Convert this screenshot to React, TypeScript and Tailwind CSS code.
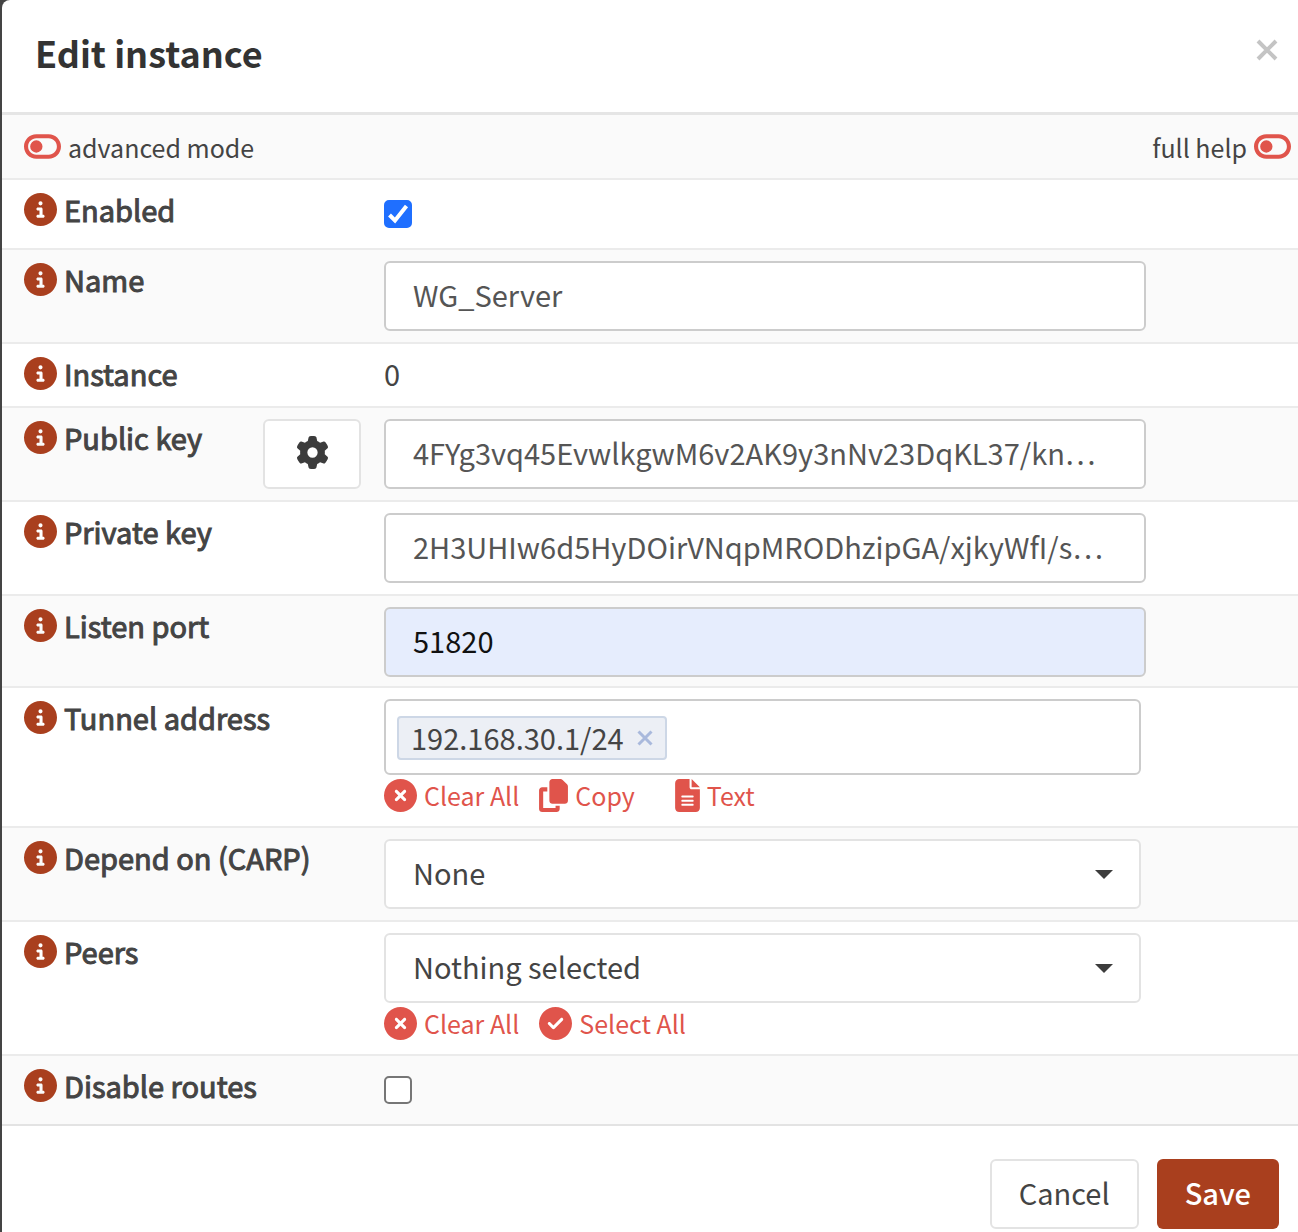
import type { ReactNode } from "react";
import {
  FaCircleCheck,
  FaCircleInfo,
  FaCircleXmark,
  FaCopy,
  FaFileLines,
  FaGear,
  FaToggleOff,
} from "react-icons/fa6";

const inputClass =
  "block h-[70px] w-full rounded-md border-2 border-[#cccccc] bg-white px-[27px] pb-1 text-[29px] text-[#555555] outline-none";

type RowProps = {
  label: string;
  htmlFor?: string;
  striped?: boolean;
  dense?: boolean;
  action?: ReactNode;
  children: ReactNode;
};

const Row = ({ label, htmlFor, striped, dense, action, children }: RowProps) => (
  <div
    className={`grid grid-cols-[360px_1fr] border-t-2 border-[#ebebeb] pt-[11px] pl-[22px] ${
      striped ? "bg-[#fafafa]" : "bg-white"
    } ${dense ? "pb-[9px]" : "pb-[11px]"}`}
  >
    <div className="flex items-start justify-between pr-[23px]">
      <label htmlFor={htmlFor} className="flex items-center gap-[7px] leading-9 [-webkit-text-stroke:1px_#444444]">
        <FaCircleInfo className="size-[33px] text-[#a93f1e]" />
        {label}
      </label>
      {action}
    </div>
    <div>{children}</div>
  </div>
);

const Select = ({ id, value }: { id: string; value: string }) => (
  <div className="relative mr-[5px]">
    <select
      id={id}
      defaultValue={value}
      className="block h-[70px] w-full appearance-none rounded-md border-2 border-[#e3e3e3] bg-white px-[27px] pb-[2px] text-[29px] text-[#444444] outline-none"
    >
      <option>{value}</option>
    </select>
    <svg
      viewBox="0 0 18 9"
      className="pointer-events-none absolute top-[31px] right-7 h-[9px] w-[18px] fill-[#3c3c3c]"
    >
      <path d="M0 0h18L9 9z" />
    </svg>
  </div>
);

const Checkbox = ({ id, checked }: { id: string; checked?: boolean }) => (
  <div className="flex h-[46px] items-center">
    <div className="relative size-7">
      <input
        id={id}
        type="checkbox"
        defaultChecked={checked}
        className="peer block size-7 appearance-none rounded-[5px] border-2 border-[#767676] bg-white checked:border-[#1f6fff] checked:bg-[#1f6fff]"
      />
      <svg
        viewBox="0 0 28 28"
        className="pointer-events-none absolute inset-0 hidden fill-none stroke-white peer-checked:block"
        strokeWidth="4"
      >
        <path d="M5.500 15l5.500 5.500L22.500 6" />
      </svg>
    </div>
  </div>
);

const LinkButton = ({ icon, children }: { icon: ReactNode; children: ReactNode }) => (
  <a href="#" className="flex items-center gap-[7px] text-[25px] text-[#e0544b]">
    {icon}
    <span className="pt-[2px]">{children}</span>
  </a>
);

const App = () => {
  return (
    <div
      lang="en"
      className="bg-[#444444] pl-[2px] font-['Noto_Sans_CJK_SC','Open_Sans',sans-serif] text-[29px] text-[#444444]"
    >
      <form className="rounded-tl-lg bg-white" onSubmit={(e) => e.preventDefault()}>
        <header className="flex h-28 items-center justify-between pr-[19px] pb-2 pl-[33px]">
          <h1 className="text-[36px] font-bold text-[#333333]">Edit instance</h1>
          <button type="button" aria-label="Close" className="mb-1">
            <svg viewBox="0 0 24 24" className="size-6 stroke-[#c4c4c4]" strokeWidth="4">
              <path d="M3 3l18 18M21 3L3 21" />
            </svg>
          </button>
        </header>

        <div className="flex h-[66px] items-center justify-between border-t-[3px] border-[#e5e5e5] bg-[#fafafa] pr-[7px] pl-[22px] text-[25px]">
          <a href="#" className="flex items-center gap-[7px]">
            <FaToggleOff className="h-[33px] w-[37px] text-[#e0544b]" />
            <span className="pt-[2px]">advanced mode</span>
          </a>
          <a href="#" className="flex items-center gap-[7px]">
            <span className="pt-[2px]">full help</span>
            <FaToggleOff className="h-[33px] w-[37px] text-[#e0544b]" />
          </a>
        </div>

        <Row label="Enabled" htmlFor="enabled">
          <Checkbox id="enabled" checked />
        </Row>
        <Row label="Name" htmlFor="name" striped>
          <div className="w-5/6">
            <input id="name" type="text" defaultValue="WG_Server" className={inputClass} />
          </div>
        </Row>
        <Row label="Instance">
          <div className="min-h-10 leading-9">0</div>
        </Row>
        <Row
          label="Public key"
          htmlFor="pubkey"
          striped
          action={
            <button
              type="button"
              aria-label="Generate new keypair"
              className="flex h-[70px] w-[98px] items-center justify-center rounded-md border-2 border-[#e3e3e3] bg-white pb-1"
            >
              <FaGear className="size-[33px] text-[#3c3c3c]" />
            </button>
          }
        >
          <div className="w-5/6">
            <input
              id="pubkey"
              type="text"
              defaultValue="4FYg3vq45EvwlkgwM6v2AK9y3nNv23DqKL37/kn…"
              className={inputClass}
            />
          </div>
        </Row>
        <Row label="Private key" htmlFor="privkey">
          <div className="w-5/6">
            <input
              id="privkey"
              type="text"
              defaultValue="2H3UHIw6d5HyDOirVNqpMRODhzipGA/xjkyWfI/s…"
              className={inputClass}
            />
          </div>
        </Row>
        <Row label="Listen port" htmlFor="port" striped dense>
          <div className="w-5/6">
            <input
              id="port"
              type="text"
              defaultValue="51820"
              className="block h-[70px] w-full rounded-md border-2 border-[#cccccc] bg-[#e6edfd] px-[27px] pb-1 text-[29px] text-[#111111] outline-none"
            />
          </div>
        </Row>
        <Row label="Tunnel address" htmlFor="tunnel">
          <div className="w-5/6">
            <div className="mr-[5px] flex h-[76px] items-center gap-2 rounded-md border-2 border-[#cccccc] bg-white px-[11px] pt-[2px]">
              <span className="flex h-11 items-center gap-[13px] rounded-sm border-2 border-[#cdd7e6] bg-[#eceff5] px-3">
                192.168.30.1/24
                <button type="button" aria-label="Remove 192.168.30.1/24">
                  <svg viewBox="0 0 16 16" className="size-4 stroke-[#a9b9dc]" strokeWidth="3">
                    <path d="M1.500 1.500l13 13M14.500 1.500l-13 13" />
                  </svg>
                </button>
              </span>
              <input id="tunnel" type="text" className="min-w-0 flex-1 outline-none" />
            </div>
            <div className="flex h-10 items-center">
              <div className="mr-5">
                <LinkButton icon={<FaCircleXmark className="size-[33px]" />}>Clear All</LinkButton>
              </div>
              <div className="mr-10">
                <LinkButton icon={<FaCopy className="h-[33px] w-[29px]" />}>Copy</LinkButton>
              </div>
              <LinkButton icon={<FaFileLines className="h-[33px] w-[25px]" />}>Text</LinkButton>
            </div>
          </div>
        </Row>
        <Row label="Depend on (CARP)" htmlFor="carp" striped>
          <div className="w-5/6">
            <Select id="carp" value="None" />
          </div>
        </Row>
        <Row label="Peers" htmlFor="peers">
          <div className="w-5/6">
            <Select id="peers" value="Nothing selected" />
            <div className="flex h-10 items-center gap-5">
              <LinkButton icon={<FaCircleXmark className="size-[33px]" />}>Clear All</LinkButton>
              <LinkButton icon={<FaCircleCheck className="size-[33px]" />}>Select All</LinkButton>
            </div>
          </div>
        </Row>
        <Row label="Disable routes" htmlFor="routes" striped>
          <Checkbox id="routes" />
        </Row>

        <footer className="flex justify-end gap-[18px] border-t-2 border-[#e3e3e3] pt-[33px] pr-[19px] pb-1">
          <button type="button" className="h-[70px] rounded-md border-2 border-[#e3e3e3] bg-white px-[27px] pb-[2px]">
            Cancel
          </button>
          <button type="submit" className="h-[70px] rounded-md bg-[#a93f1e] px-7 pb-[2px] font-medium text-white">
            Save
          </button>
        </footer>
      </form>
    </div>
  );
};

export default App;
